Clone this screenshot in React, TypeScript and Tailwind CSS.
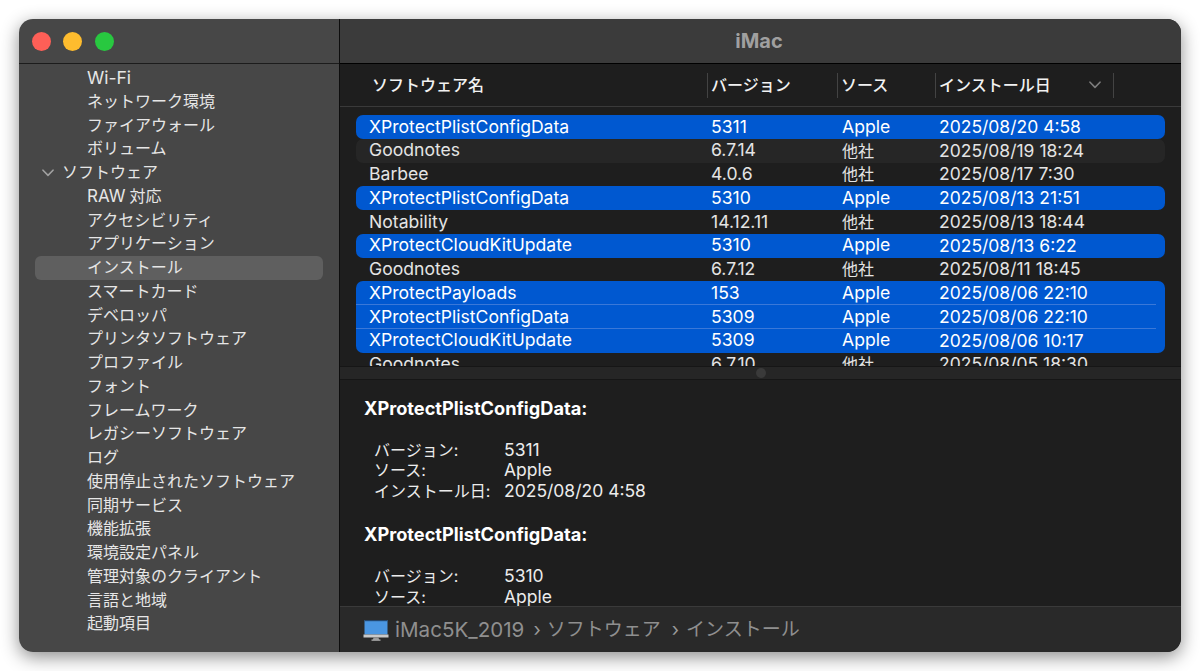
const font = "font-['Inter','Noto_Sans_CJK_JP',sans-serif]";

const sidebarItems = [
  "ネットワーク環境",
  "ファイアウォール",
  "ボリューム",
  "ソフトウェア",
  "RAW 対応",
  "アクセシビリティ",
  "アプリケーション",
  "インストール",
  "スマートカード",
  "デベロッパ",
  "プリンタソフトウェア",
  "プロファイル",
  "フォント",
  "フレームワーク",
  "レガシーソフトウェア",
  "ログ",
  "使用停止されたソフトウェア",
  "同期サービス",
  "機能拡張",
  "環境設定パネル",
  "管理対象のクライアント",
  "言語と地域",
  "起動項目",
];

type Row = {
  name: string;
  version: string;
  source: string;
  date: string;
  selected?: boolean;
  rounded?: string;
  divider?: boolean;
  striped?: boolean;
};

const rows: Row[] = [
  { name: "XProtectPlistConfigData", version: "5311", source: "Apple", date: "2025/08/20 4:58", selected: true, rounded: "rounded-[7px]" },
  { name: "Goodnotes", version: "6.7.14", source: "他社", date: "2025/08/19 18:24", striped: true, rounded: "rounded-[7px]" },
  { name: "Barbee", version: "4.0.6", source: "他社", date: "2025/08/17 7:30" },
  { name: "XProtectPlistConfigData", version: "5310", source: "Apple", date: "2025/08/13 21:51", selected: true, rounded: "rounded-[7px]" },
  { name: "Notability", version: "14.12.11", source: "他社", date: "2025/08/13 18:44" },
  { name: "XProtectCloudKitUpdate", version: "5310", source: "Apple", date: "2025/08/13 6:22", selected: true, rounded: "rounded-[7px]" },
  { name: "Goodnotes", version: "6.7.12", source: "他社", date: "2025/08/11 18:45" },
  { name: "XProtectPayloads", version: "153", source: "Apple", date: "2025/08/06 22:10", selected: true, rounded: "rounded-t-[7px]", divider: true },
  { name: "XProtectPlistConfigData", version: "5309", source: "Apple", date: "2025/08/06 22:10", selected: true, divider: true },
  { name: "XProtectCloudKitUpdate", version: "5309", source: "Apple", date: "2025/08/06 10:17", selected: true, rounded: "rounded-b-[7px]" },
  { name: "Goodnotes", version: "6.7.10", source: "他社", date: "2025/08/05 18:30" },
];

const details = [
  { title: "XProtectPlistConfigData:", version: "5311", source: "Apple", date: "2025/08/20 4:58" },
  { title: "XProtectPlistConfigData:", version: "5310", source: "Apple", date: "2025/08/13 21:51" },
];

function Chevron({ className }: { className: string }) {
  return (
    <svg viewBox="0 0 12 8" fill="none" className={className}>
      <path d="M1 1.2 6 6.4l5-5.2" stroke="currentColor" strokeWidth="1.6" strokeLinecap="round" strokeLinejoin="round" />
    </svg>
  );
}

function ImacIcon() {
  return (
    <svg viewBox="0 0 26 21" className="h-[21px] w-[26px] shrink-0">
      <rect x="1.5" y="0" width="23" height="14.5" fill="#4a96e2" />
      <rect x="1.5" y="0" width="23" height="1.2" fill="#23476f" />
      <rect x="0.5" y="14.5" width="25" height="3" fill="#c9c9c9" />
      <path d="M10.5 17.5h5l.7 2.2h-6.4z" fill="#9a9a9a" />
      <rect x="8.5" y="19.6" width="9" height="1" fill="#d6d6d6" />
    </svg>
  );
}

function SidebarRow({ item }: { item: string }) {
  const isParent = item === "ソフトウェア";
  const isActive = item === "インストール";
  return (
    <li
      className={`flex h-[23.75px] items-center rounded-[6px] whitespace-nowrap ${isParent ? "pl-[7px]" : "pl-[52px]"} ${isActive ? "bg-[#5f5f5f]" : ""}`}
    >
      {isParent && <Chevron className="mr-[8px] h-2 w-3 text-[#a0a0a0]" />}
      {item === "RAW 対応" ? (
        <>
          <span className="text-[17px]">RAW</span>
          <span className="ml-1">対応</span>
        </>
      ) : (
        item
      )}
    </li>
  );
}

function Sidebar() {
  return (
    <aside className="flex w-[321px] shrink-0 flex-col border-r border-[#0d0d0d] bg-[#474747]">
      <div className="flex h-[45px] shrink-0 items-center gap-[12.7px] border-b border-[#1c1c1c] pl-[12.5px]">
        <span className="size-[19px] rounded-full bg-[#fe5f57]" />
        <span className="size-[19px] rounded-full bg-[#febc2e]" />
        <span className="size-[19px] rounded-full bg-[#28c840]" />
      </div>
      <ul className="flex flex-col px-4 pt-[2px] text-[16px] leading-[23.75px] text-[#e6e6e6]">
        <li className="flex h-[23.75px] items-center pl-[52px] text-[17.5px]">Wi-Fi</li>
        {sidebarItems.map((item) => (
          <SidebarRow key={item} item={item} />
        ))}
      </ul>
    </aside>
  );
}

function HeaderCell({ label, className, last }: { label: string; className: string; last?: boolean }) {
  return (
    <div className={`flex h-[25px] items-center border-l border-[#434343] pl-[3px] ${className}`}>
      {label}
      {last && <Chevron className="ml-auto mr-[12px] h-2 w-3 text-[#7c7c7c]" />}
    </div>
  );
}

function SoftwareTable() {
  return (
    <>
      <div className="flex h-[43px] shrink-0 items-center border-b border-[#3a3a3a] pl-[32px] text-[16px] font-medium text-[#f2f2f2]">
        <div className="w-[335px]">ソフトウェア名</div>
        <HeaderCell label="バージョン" className="w-[130px]" />
        <HeaderCell label="ソース" className="w-[98px]" />
        <HeaderCell label="インストール日" className="w-[179px] border-r" last />
      </div>
      <div className="h-[259px] shrink-0 overflow-hidden px-4 pt-[8px] text-[17.6px] text-[#e4e4e4]">
        {rows.map((row, i) => (
          <div
            key={i}
            className={`relative flex h-[23.75px] items-center pl-[13px] whitespace-nowrap ${row.rounded ?? ""} ${row.selected ? "bg-[#0058d0] text-white" : ""} ${row.striped ? "bg-[#262626]" : ""}`}
          >
            <div className="w-[343px]">{row.name}</div>
            <div className="-ml-px w-[131px]">{row.version}</div>
            <div className={`w-[97px] ${row.source === "他社" ? "text-[16px]" : ""}`}>{row.source}</div>
            <div className="text-[17.5px]">{row.date}</div>
            {row.divider && <div className="absolute right-[9px] bottom-0 left-0 h-px bg-[#3a78d8]" />}
          </div>
        ))}
      </div>
    </>
  );
}

function Detail() {
  return (
    <div className="min-h-0 flex-1 overflow-hidden bg-[#1e1e1e] pt-[17.5px] pl-[24px] text-[16px] leading-[20.5px] text-[#ececec]">
      {details.map((d, i) => (
        <div key={i} className="mb-[23px] whitespace-nowrap">
          <div className="mb-[21.5px] text-[18.2px] font-bold text-white">{d.title}</div>
          <div className="grid grid-cols-[130px_1fr] pl-[10px]">
            <span>バージョン:</span>
            <span className="text-[17.5px]">{d.version}</span>
            <span>ソース:</span>
            <span className="text-[17.5px]">{d.source}</span>
            <span>インストール日:</span>
            <span className="text-[17.5px]">{d.date}</span>
          </div>
        </div>
      ))}
    </div>
  );
}

export default function App() {
  return (
    <div className={`h-[671px] w-[1200px] overflow-hidden bg-white pt-[19px] pr-[19px] pb-[19px] pl-[19px] ${font}`}>
      <div className="flex h-[633px] overflow-hidden rounded-[14px] shadow-[0_5px_18px_rgba(0,0,0,0.45)]">
        <Sidebar />
        <main className="flex min-w-0 flex-1 flex-col bg-[#1e1e1e]">
          <div className="flex h-[45px] shrink-0 items-center justify-center border-b border-black bg-[#3b3b3b] pr-[3px] text-[20px] font-bold text-[#a0a0a0]">
            iMac
          </div>
          <SoftwareTable />
          <div className="relative h-[14px] shrink-0 border-y border-[#161616] bg-[#262626]">
            <span className="absolute top-[1px] left-[416px] size-[10px] rounded-full bg-[#3a3a3a]" />
          </div>
          <Detail />
          <div className="flex h-[46px] shrink-0 items-center border-t border-[#3a3a3a] bg-[#292929] pt-[2px] pl-[23px] text-[19px] text-[#8f8f8f]">
            <ImacIcon />
            <span className="ml-[6px] text-[20.6px]">iMac5K_2019</span>
            <span className="ml-[9px] text-[#9a9a9a]">›</span>
            <span className="ml-[6px]">ソフトウェア</span>
            <span className="ml-[11px] text-[#9a9a9a]">›</span>
            <span className="ml-[7px]">インストール</span>
          </div>
        </main>
      </div>
    </div>
  );
}
